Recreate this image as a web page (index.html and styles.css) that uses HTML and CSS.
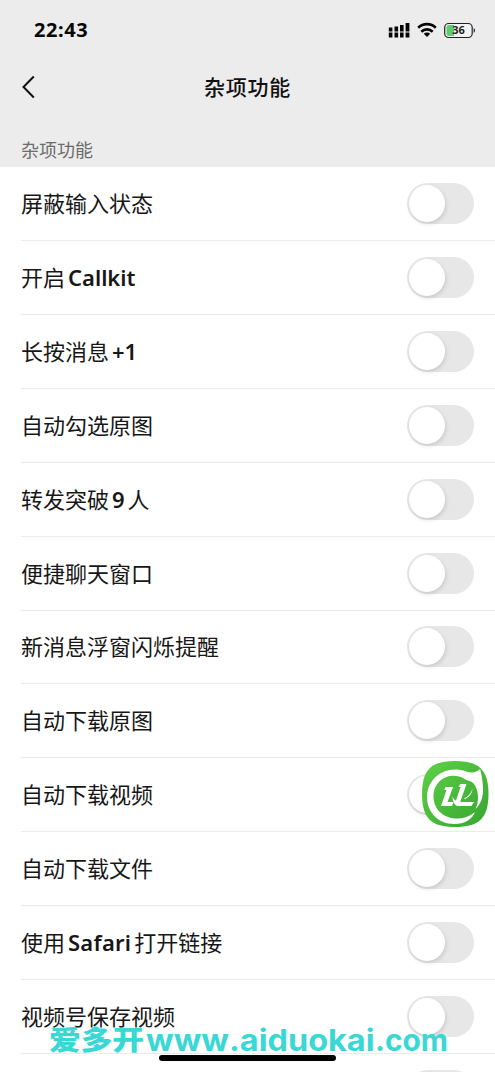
FILE: index.html
```html
<!DOCTYPE html>
<html lang="zh-CN">
<head>
<meta charset="utf-8">
<title>杂项功能</title>
<link rel="stylesheet" href="styles.css">
</head>
<body>
<div class="screen">
  <header class="top">
    <div class="status">
      <span class="time">22:43</span>
      <svg class="indicators" width="90" height="20" viewBox="0 0 90 20">
        <g fill="#050505">
          <path d="M.8 7.500h3.600v4H.8zM.8 12.500h3.600v5H.8zM6.500 6.500h3.600v5H6.500zM6.500 12.500h3.600v5H6.500zM12 5h3.600v6.500H12zM12 12.500h3.600v5H12zM17.600 3h3.800v8.500h-3.800zM17.600 12.500h3.800v5h-3.800z"/>
          <path d="M39 17l-3.200-3.200a4.500 4.500 0 0 1 6.400 0z"/>
        </g>
        <path d="M30.200 7.700a12.600 12.600 0 0 1 17.600 0M33.300 11.700a8.200 8.200 0 0 1 11.400 0" fill="none" stroke="#050505" stroke-width="2.600"/>
        <rect x="56.700" y="3.500" width="27.500" height="14" rx="4" fill="#f3f3f3" stroke="#222" stroke-width="1.200"/>
        <path d="M61 5h5v11h-5a2.500 2.500 0 0 1-2.500-2.500v-6a2.500 2.500 0 0 1 2.500-2.500z" fill="#5fcc70"/>
        <path d="M85.700 8q2.800 2.400 0 5z" fill="#222"/>
        <text class="charge" x="70.500" y="14.400" text-anchor="middle">36</text>
      </svg>
    </div>
    <div class="nav">
      <svg class="back" width="14" height="24" viewBox="0 0 14 24"><path d="M11.800 1.500L1.500 12l10.300 10.500" fill="none" stroke="#111" stroke-width="2"/></svg>
      <h1 class="title">杂项功能</h1>
    </div>
    <h2 class="section">杂项功能</h2>
  </header>
  <main class="list">
    <div class="row"><span class="label">屏蔽输入状态</span><i class="toggle"></i></div>
    <div class="row"><span class="label">开启<b class="latin">Callkit</b></span><i class="toggle"></i></div>
    <div class="row"><span class="label">长按消息<b class="latin">+1</b></span><i class="toggle"></i></div>
    <div class="row"><span class="label">自动勾选原图</span><i class="toggle"></i></div>
    <div class="row"><span class="label">转发突破<b class="latin nine">9</b>人</span><i class="toggle"></i></div>
    <div class="row"><span class="label">便捷聊天窗口</span><i class="toggle"></i></div>
    <div class="row"><span class="label">新消息浮窗闪烁提醒</span><i class="toggle"></i></div>
    <div class="row"><span class="label">自动下载原图</span><i class="toggle"></i></div>
    <div class="row"><span class="label">自动下载视频</span><i class="toggle"></i></div>
    <div class="row"><span class="label">自动下载文件</span><i class="toggle"></i></div>
    <div class="row"><span class="label">使用<b class="latin safari">Safari</b>打开链接</span><i class="toggle"></i></div>
    <div class="row"><span class="label">视频号保存视频</span><i class="toggle"></i></div>
    <div class="row"><span class="label"></span><i class="toggle"></i></div>
  </main>
  <svg class="float" width="68" height="68" viewBox="0 0 68 68">
    <defs><linearGradient id="leaf" x1="0" y1="0" x2="1" y2="1"><stop offset="0" stop-color="#5fd146"/><stop offset="1" stop-color="#36a530"/></linearGradient></defs>
    <path d="M34 1C57 1 67.500 9 67.500 34S57 67 34 67 1 59 1 34 11 1 34 1z" fill="url(#leaf)"/>
    <path d="M59 9C56 12.500 51 13.500 45 11.500C25 4.500 6 18 6 37C6 53 18 64 33 64C44 64 51 59.500 54 52C48 57 41 59 34 58.500C21 57.500 12.500 48 12.500 36.500C12.500 21 26 13 38 16.500C43 18 46 21 49 21C54 23 57 30 57 37C57 42 56 46 54.500 49C60 44 62.500 36 62 28C61.700 20 60.500 14 59 9z" fill="#fff"/>
    <path d="M24.500 27h7.500l-5.500 15h6l-1.500 4H20l5.500-16h-2.200z" fill="#fff"/>
    <path d="M39.500 24h6l-6.300 18H53l-2.500 4H36c-3-1.500-4.500-5-4.500-9.500 1.200 2.500 2 3.500 3.500 4L39.500 27h-2.200zM43 38.500c4-2 7-5 8.500-9.500-.7 5-3 8-7.500 10z" fill="#fff"/>
  </svg>
  <svg class="watermark" width="495" height="46" viewBox="0 0 495 46">
    <text class="brand" x="49" y="33.500" textLength="95" lengthAdjust="spacingAndGlyphs">爱多开</text>
    <text class="domain" x="146" y="35" textLength="83" lengthAdjust="spacingAndGlyphs">www</text>
    <text class="domain" x="229" y="35" textLength="145.500" lengthAdjust="spacingAndGlyphs">.aiduokai</text>
    <text class="domain" x="375" y="35" textLength="73" lengthAdjust="spacingAndGlyphs">.com</text>
  </svg>
  <div class="homebar"></div>
</div>
</body>
</html>
```
FILE: styles.css
```css
* { box-sizing: border-box; }
body { margin: 0; overflow: hidden; background: #fff; color: #171717; font-family: "Noto Sans CJK SC", sans-serif; }
.screen { position: relative; width: 495px; height: 1072px; overflow: hidden; }
.top { height: 167px; background: #ececec; display: flex; flex-direction: column; }
.status { height: 60px; padding: 0 17px 0 34px; display: flex; align-items: center; justify-content: space-between; }
.time { font: 700 20px/24px "Noto Sans", sans-serif; letter-spacing: .6px; color: #080808; }
.charge { font: 700 11px "Noto Sans", sans-serif; fill: #222; }
.nav { height: 54px; padding: 0 22px; display: grid; grid-template-columns: 14px 1fr 14px; align-items: center; }
.title { margin: 0; padding-bottom: 2px; text-align: center; font-size: 21px; line-height: 30px; font-weight: 500; letter-spacing: .8px; color: #111; }
.section { margin: 0; padding: 22px 21px 0; font-size: 18px; line-height: 26px; font-weight: 400; color: #6b6b6b; }
.row { height: 73.93px; margin-left: 21px; padding-right: 21px; border-bottom: 1px solid #ebebeb; display: flex; align-items: center; justify-content: space-between; }
.label { padding-bottom: 3px; font-size: 22px; line-height: 32px; white-space: nowrap; }
.latin { margin-left: 3px; font-family: "Noto Sans", sans-serif; font-weight: 600; line-height: 1; }
.nine { margin: 0 3px; }
.safari { margin: 0 3px; letter-spacing: .25px; }
.toggle { width: 67px; height: 41px; padding: 2px; border-radius: 21px; background: #e7e7e7; }
.toggle::before { content: ""; display: block; width: 36px; height: 37px; border-radius: 50%; background: #fff; box-shadow: 1px 2px 4px rgba(0, 0, 0, .13); }
.float { position: absolute; left: 421px; top: 760px; }
.homebar { position: absolute; left: 159px; top: 1055px; width: 177px; height: 6px; border-radius: 3px; background: #000; }
.watermark { position: absolute; left: 0; top: 1016px; fill: #3ad8d5; }
.brand { font: 900 27px "Noto Sans CJK SC", sans-serif; }
.domain { font: 700 30px Inter, sans-serif; }
```
